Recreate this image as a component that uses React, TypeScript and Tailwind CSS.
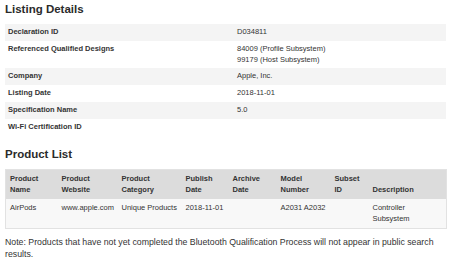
import React from "react";

const details: { label: string; value: string[] }[] = [
  { label: "Declaration ID", value: ["D034811"] },
  { label: "Referenced Qualified Designs", value: ["84009 (Profile Subsystem)", "99179 (Host Subsystem)"] },
  { label: "Company", value: ["Apple, Inc."] },
  { label: "Listing Date", value: ["2018-11-01"] },
  { label: "Specification Name", value: ["5.0"] },
  { label: "Wi-Fi Certification ID", value: [] },
];

const columns: { title: string[]; width: number }[] = [
  { title: ["Product", "Name"], width: 52 },
  { title: ["Product", "Website"], width: 60 },
  { title: ["Product", "Category"], width: 64 },
  { title: ["Publish", "Date"], width: 47 },
  { title: ["Archive", "Date"], width: 48 },
  { title: ["Model", "Number"], width: 54 },
  { title: ["Subset", "ID"], width: 38 },
  { title: ["Description"], width: 78 },
];

const product: string[][] = [
  ["AirPods"],
  ["www.apple.com"],
  ["Unique Products"],
  ["2018-11-01"],
  [],
  ["A2031 A2032"],
  [],
  ["Controller", "Subsystem"],
];

export default function App() {
  return (
    <div
      className="w-[450px] h-[269px] overflow-hidden bg-white pl-[5px] pr-[4px] text-[#333333]"
      style={{ fontFamily: '"Liberation Sans", Arial, sans-serif' }}
    >
      <h2 className="text-[11.5px] font-bold leading-[14px] pt-[2px] text-[#2b2b2b]">Listing Details</h2>
      <table className="mt-[8px] w-full table-fixed border-collapse text-[7.5px] leading-[10.8px]">
        <colgroup>
          <col className="w-[229px]" />
          <col />
        </colgroup>
        <tbody>
          {details.map((row, i) => (
            <tr key={row.label} className={i % 2 === 0 ? "bg-[#f4f4f4]" : "bg-white"}>
              <td className="py-[3px] pl-[3px] align-top font-bold">{row.label}</td>
              <td className="py-[3px] pl-[3px] align-top">
                {row.value.map((v) => (
                  <div key={v}>{v}</div>
                ))}
                {row.value.length === 0 && <div>&nbsp;</div>}
              </td>
            </tr>
          ))}
        </tbody>
      </table>

      <h2 className="mt-[11px] text-[11.5px] font-bold leading-[14px] text-[#2b2b2b]">Product List</h2>
      <table className="mt-[8px] w-full table-fixed border-collapse border border-[#e2e2e2] text-[7.5px] leading-[11px]">
        <colgroup>
          {columns.map((c) => (
            <col key={c.title.join(" ")} style={{ width: c.width }} />
          ))}
        </colgroup>
        <thead>
          <tr className="bg-[#dcdcdc]">
            {columns.map((c) => (
              <th key={c.title.join(" ")} className="pt-[3px] pb-[4px] pl-[4px] text-left align-bottom font-bold">
                {c.title.map((t) => (
                  <div key={t}>{t}</div>
                ))}
              </th>
            ))}
          </tr>
        </thead>
        <tbody>
          <tr className="bg-[#f8f8f8]">
            {product.map((cell, i) => (
              <td key={i} className="pt-[3px] pb-[4px] pl-[4px] align-top">
                {cell.map((t) => (
                  <div key={t}>{t}</div>
                ))}
                {cell.length === 0 && <div>&nbsp;</div>}
              </td>
            ))}
          </tr>
        </tbody>
      </table>

      <p className="mt-[7px] text-[8.75px] leading-[12.7px] text-[#333333]">
        Note: Products that have not yet completed the Bluetooth Qualification Process will not appear in public search
        results.
      </p>
    </div>
  );
}
